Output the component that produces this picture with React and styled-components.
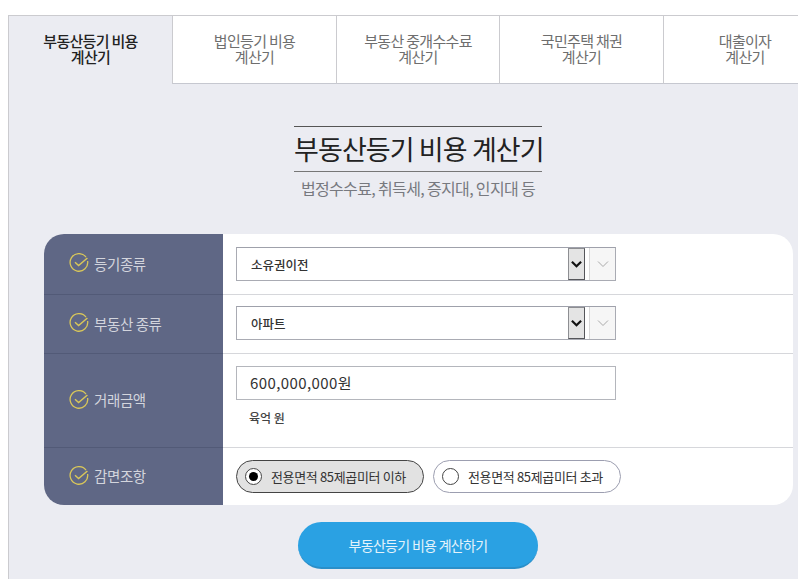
import React from 'react';
import styled, { createGlobalStyle } from 'styled-components';

const GlobalStyle = createGlobalStyle`
    html, body {
        margin: 0;
        padding: 0;
        background: #fff;
        overflow: hidden;
    }
    body {
        font-family: "Noto Sans CJK KR", "Noto Sans", sans-serif;
    }
`;

const Page = styled.div`
    width: 798px;
    height: 579px;
    padding: 15px 0 0 8px;
    box-sizing: border-box;
    overflow: hidden;
`;
const Panel = styled.div`
    width: 800px;
    height: 564px;
    box-sizing: border-box;
    background: #ebecf2;
    border-top: 1px solid #cbcbcf;
    border-left: 1px solid #cbcbcf;
`;
const TabBar = styled.div`
    display: flex;
    height: 68px;
`;
const Tab = styled.div`
    width: ${props => props.$width}px;
    flex: none;
    box-sizing: border-box;
    display: flex;
    align-items: center;
    justify-content: center;
    padding-bottom: 2px;
    text-align: center;
    font-size: 15px;
    line-height: 16px;
    letter-spacing: -0.7px;
    color: ${props => (props.$active ? '#222' : '#6e6e6e')};
    font-weight: ${props => (props.$active ? 500 : 400)};
    background: ${props => (props.$active ? 'transparent' : '#fff')};
    border-bottom: ${props => (props.$active ? 'none' : '1px solid #c6c8d0')};
    border-left: ${props => (props.$active ? 'none' : '1px solid #cbcbcf')};
`;
const Heading = styled.div`
    width: 818px;
    display: flex;
    flex-direction: column;
    align-items: center;
    margin-top: 42px;
`;
const Title = styled.h2`
    margin: 0;
    width: 248px;
    height: 46px;
    box-sizing: border-box;
    border-top: 1px solid #555;
    border-bottom: 1px solid #777;
    font-size: 27px;
    font-weight: 400;
    line-height: 44px;
    letter-spacing: -0.9px;
    text-align: center;
    white-space: nowrap;
    color: #222;
`;
const Subtitle = styled.p`
    margin: 4px 0 0;
    font-size: 16px;
    line-height: 24px;
    letter-spacing: -0.65px;
    color: #77797f;
`;
const Form = styled.div`
    width: 749px;
    margin: 34px 0 0 35px;
    background: #fff;
    border-radius: 20px;
    overflow: hidden;
`;
const Row = styled.div`
    display: flex;
    height: ${props => props.$height}px;
`;
const Label = styled.div`
    width: 179px;
    flex: none;
    box-sizing: border-box;
    display: flex;
    align-items: center;
    gap: 5px;
    padding: 0 0 2px 25px;
    background: #5f6785;
    border-bottom: ${props => (props.$last ? 'none' : '1px solid #525a77')};
    font-size: 14.5px;
    letter-spacing: -0.4px;
    color: #d3d5dd;
`;
const Field = styled.div`
    flex: 1;
    box-sizing: border-box;
    display: flex;
    flex-direction: column;
    padding: ${props => props.$top}px 0 0 13px;
    border-bottom: ${props => (props.$last ? 'none' : '1px solid #d6d7db')};
`;
const SelectBox = styled.div`
    width: 380px;
    height: 34px;
    box-sizing: border-box;
    display: flex;
    align-items: center;
    justify-content: space-between;
    background: #fff;
    border: 1px solid #a9abb3;
    border-top-color: #9fa1ab;
    padding-left: 14px;
    font-size: 12.5px;
    font-weight: 500;
    color: #333;
`;
const SelectArrows = styled.div`
    display: flex;
    gap: 4px;
    align-self: stretch;
`;
const NativeArrow = styled.div`
    width: 17px;
    box-sizing: border-box;
    display: flex;
    align-items: center;
    justify-content: center;
    background: #e4e4e4;
    border: 1px solid #55565a;
    border-top-color: #8d8e92;
    border-left-color: #8d8e92;
`;
const SkinArrow = styled.div`
    width: 26px;
    box-sizing: border-box;
    display: flex;
    align-items: center;
    justify-content: center;
    background: #f6f6f6;
    border-left: 1px solid #d8d8d8;
`;
const MoneyInput = styled.div`
    width: 380px;
    height: 34px;
    box-sizing: border-box;
    border: 1px solid #b4b6bc;
    padding-left: 13px;
    font-size: 15px;
    letter-spacing: 0.4px;
    line-height: 31px;
    color: #333;
`;
const Korean = styled.div`
    margin: 9px 0 0 13px;
    font-size: 12px;
    font-weight: 500;
    line-height: 18px;
    color: #444;
`;
const RadioRow = styled.div`
    display: flex;
    gap: 9px;
`;
const RadioPill = styled.div`
    height: 33px;
    width: 188px;
    box-sizing: border-box;
    display: flex;
    align-items: center;
    gap: 9px;
    padding-left: 8px;
    border-radius: 17px;
    border: 1px solid ${props => (props.$checked ? '#444' : '#9c9eb0')};
    background: ${props => (props.$checked ? '#e2e2e2' : '#fff')};
    font-size: 13px;
    letter-spacing: -0.35px;
    white-space: nowrap;
    color: #333;
`;
const RadioDot = styled.span`
    width: 17px;
    height: 17px;
    flex: none;
    box-sizing: border-box;
    border-radius: 50%;
    background: #fff;
    border: 1px solid #444;
    display: flex;
    align-items: center;
    justify-content: center;
    &::after {
        content: '';
        display: ${props => (props.$checked ? 'block' : 'none')};
        width: 9px;
        height: 9px;
        border-radius: 50%;
        background: #000;
    }
`;
const Actions = styled.div`
    width: 818px;
    display: flex;
    justify-content: center;
    margin-top: 17px;
`;
const CalcButton = styled.button`
    width: 240px;
    height: 47px;
    border: none;
    border-bottom: 2px solid #2a8fc9;
    border-radius: 24px;
    background: #2aa1e3;
    color: #e4f3fb;
    font-family: inherit;
    font-size: 14px;
    letter-spacing: -0.7px;
`;

const CheckIcon = () => (
    <svg width="20" height="20" viewBox="0 0 20 20" fill="none" stroke="#d8c65a" strokeWidth="1.3">
        <path d="M17 4.2A8.8 8.8 0 1 0 18.6 8" />
        <path d="M6 9.2l3.6 3.4L18.4 5" strokeWidth="1.5" />
    </svg>
);

const Chevron = ({ color, width, weight }) => (
    <svg width={width} height="8" viewBox="0 0 12 8" fill="none" stroke={color} strokeWidth={weight}>
        <path d="M1 1.5l5 5 5-5" />
    </svg>
);

const Select = ({ value }) => (
    <SelectBox>
        {value}
        <SelectArrows>
            <NativeArrow><Chevron color="#111" width={11} weight={2.4} /></NativeArrow>
            <SkinArrow><Chevron color="#aaa" width={12} weight={1} /></SkinArrow>
        </SelectArrows>
    </SelectBox>
);

const RowLabel = ({ text, last }) => (
    <Label $last={last}>
        <CheckIcon />
        <span>{text}</span>
    </Label>
);

const tabs = [
    { lines: ['부동산등기 비용', '계산기'], width: 163, active: true },
    { lines: ['법인등기 비용', '계산기'], width: 164 },
    { lines: ['부동산 중개수수료', '계산기'], width: 163 },
    { lines: ['국민주택 채권', '계산기'], width: 164 },
    { lines: ['대출이자', '계산기'], width: 163 },
];

const App = () => {
    return (
        <Page>
            <GlobalStyle />
            <Panel>
                <TabBar>
                    {tabs.map(tab => (
                        <Tab key={tab.lines[0]} $width={tab.width} $active={tab.active}>
                            <div>{tab.lines[0]}<br />{tab.lines[1]}</div>
                        </Tab>
                    ))}
                </TabBar>
                <Heading>
                    <Title>부동산등기 비용 계산기</Title>
                    <Subtitle>법정수수료, 취득세, 증지대, 인지대 등</Subtitle>
                </Heading>
                <Form>
                    <Row $height={61}>
                        <RowLabel text="등기종류" />
                        <Field $top={13}><Select value="소유권이전" /></Field>
                    </Row>
                    <Row $height={59}>
                        <RowLabel text="부동산 종류" />
                        <Field $top={11}><Select value="아파트" /></Field>
                    </Row>
                    <Row $height={94}>
                        <RowLabel text="거래금액" />
                        <Field $top={12}>
                            <MoneyInput>600,000,000원</MoneyInput>
                            <Korean>육억 원</Korean>
                        </Field>
                    </Row>
                    <Row $height={57}>
                        <RowLabel text="감면조항" last />
                        <Field $top={12} $last>
                            <RadioRow>
                                <RadioPill $checked>
                                    <RadioDot $checked />전용면적 85제곱미터 이하
                                </RadioPill>
                                <RadioPill>
                                    <RadioDot />전용면적 85제곱미터 초과
                                </RadioPill>
                            </RadioRow>
                        </Field>
                    </Row>
                </Form>
                <Actions>
                    <CalcButton>부동산등기 비용 계산하기</CalcButton>
                </Actions>
            </Panel>
        </Page>
    );
};

export default App;
